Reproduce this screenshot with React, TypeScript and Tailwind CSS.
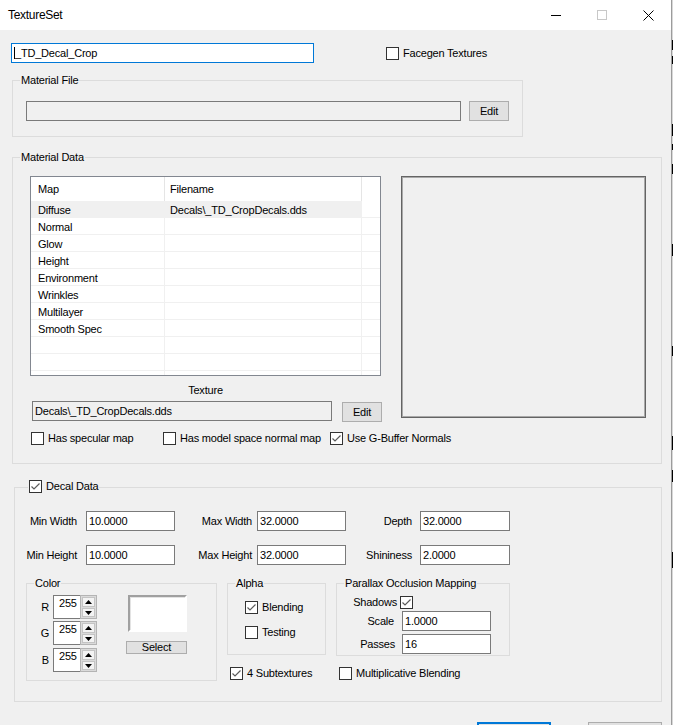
import React from 'react';

type Kids = { children?: React.ReactNode };

const maps: [string, string][] = [
  ['Diffuse', 'Decals\\_TD_CropDecals.dds'],
  ['Normal', ''],
  ['Glow', ''],
  ['Height', ''],
  ['Environment', ''],
  ['Wrinkles', ''],
  ['Multilayer', ''],
  ['Smooth Spec', ''],
  ['', ''],
  ['', ''],
  ['', ''],
];

const decalRows: [string, string][][] = [
  [['Min Width', '10.0000'], ['Max Width', '32.0000'], ['Depth', '32.0000']],
  [['Min Height', '10.0000'], ['Max Height', '32.0000'], ['Shininess', '2.0000']],
];

function Check({ checked }: { checked?: boolean }) {
  return (
    <span className="flex h-[13px] w-[13px] shrink-0 items-center justify-center border border-[#333333] bg-white">
      {checked && (
        <svg width="11" height="11" viewBox="0 0 11 11">
          <path d="M1.5 5.5 L4 8 L9.5 2.5" fill="none" stroke="#5c5c5c" strokeWidth="1.2" />
        </svg>
      )}
    </span>
  );
}

function CheckLabel({ label, checked, className = '' }: { label: string; checked?: boolean; className?: string }) {
  return (
    <div className={`flex items-center leading-[13px] ${className}`}>
      <Check checked={checked} />
      <span className="ml-[4px]">{label}</span>
    </div>
  );
}

function TextBox({ value = '', className = '', grey }: { value?: string; className?: string; grey?: boolean }) {
  return (
    <div
      className={`h-[20px] shrink-0 overflow-hidden whitespace-nowrap border border-[#7a7a7a] pl-[2px] leading-[18px] ${
        grey ? 'bg-[#f0f0f0]' : 'bg-white'
      } ${className}`}
    >
      {value}
    </div>
  );
}

function Button({ label, className = '' }: { label: string; className?: string }) {
  return (
    <div className={`flex shrink-0 items-center justify-center border border-[#adadad] bg-[#e1e1e1] ${className}`}>
      {label}
    </div>
  );
}

function Group({
  legend,
  legendClass = 'left-[7px] top-[-7px]',
  className = '',
  children,
}: Kids & { legend: React.ReactNode; legendClass?: string; className?: string }) {
  return (
    <div className={`relative shrink-0 border border-[#dcdcdc] ${className}`}>
      <div className={`absolute bg-[#f0f0f0] px-px leading-[13px] ${legendClass}`}>{legend}</div>
      {children}
    </div>
  );
}

function Arrow({ down }: { down?: boolean }) {
  return (
    <svg width="7" height="4" viewBox="0 0 7 4">
      <path d={down ? 'M0 0 L7 0 L3.5 4Z' : 'M0 4 L3.5 0 L7 4Z'} fill="#000" />
    </svg>
  );
}

function Spin({ value }: { value: string }) {
  return (
    <div className="flex h-[24px] w-[44px]">
      <div className="w-[27px] border border-r-0 border-[#7a7a7a] bg-white pl-[5px] pt-px leading-[13px]">{value}</div>
      <div className="flex w-[17px] flex-col border border-[#b4b4b4] bg-[#dadada] p-px">
        <div className="flex h-[10px] items-center justify-center border border-[#c4c4c4] bg-[#f3f3f3]">
          <Arrow />
        </div>
        <div className="mt-px flex h-[9px] items-center justify-center border border-[#c4c4c4] bg-[#f3f3f3]">
          <Arrow down />
        </div>
      </div>
    </div>
  );
}

function TitleBar() {
  return (
    <div className="flex h-[30px] items-center bg-white">
      <span className="pl-[8px] text-[12px] tracking-[-0.3px]">TextureSet</span>
      <div className="ml-auto flex h-full">
        <div className="flex w-[46px] items-center justify-center">
          <svg width="10" height="10" viewBox="0 0 10 10">
            <path d="M0 5.5 H10" stroke="#000" strokeWidth="1" />
          </svg>
        </div>
        <div className="flex w-[46px] items-center justify-center">
          <svg width="10" height="10" viewBox="0 0 10 10">
            <rect x="0.5" y="0.5" width="9" height="9" fill="none" stroke="#c8c8c8" strokeWidth="1" />
          </svg>
        </div>
        <div className="flex w-[46px] items-center justify-center">
          <svg width="11" height="11" viewBox="0 0 11 11">
            <path d="M0.5 0.5 L10.5 10.5 M10.5 0.5 L0.5 10.5" stroke="#000" strokeWidth="1" />
          </svg>
        </div>
      </div>
    </div>
  );
}

function MapTable() {
  return (
    <div className="h-[200px] w-[351px] overflow-hidden border border-[#828790] bg-white">
      <div className="flex h-[24px]">
        <div className="w-[134px] border-r border-[#e5e5e5] pl-[7px] pt-[6px] leading-[13px]">Map</div>
        <div className="w-[197px] border-r border-[#e5e5e5] pl-[5px] pt-[6px] leading-[13px]">Filename</div>
        <div className="flex-1" />
      </div>
      {maps.map(([map, file], i) => (
        <div key={i} className="flex h-[17px] border-b border-[#f0f0f0]">
          <div className={`flex w-[331px] ${i === 0 ? 'bg-[#f0f0f0]' : ''}`}>
            <div className="w-[134px] border-r border-[#f0f0f0] pl-[7px] pt-[2px] leading-[14px]">{map}</div>
            <div className="w-[197px] border-r border-[#f0f0f0] pl-[5px] pt-[2px] leading-[14px]">{file}</div>
          </div>
          <div className="flex-1" />
        </div>
      ))}
    </div>
  );
}

function MaterialData() {
  return (
    <Group legend="Material Data" className="ml-[12px] mt-[20px] h-[307px] w-[650px] pl-[17px] pt-[18px]">
      <div className="flex items-start">
        <div className="w-[351px]">
          <MapTable />
          <div className="flex h-[25px] items-center justify-center pt-[4px]">Texture</div>
          <div className="flex">
            <TextBox grey value="Decals\_TD_CropDecals.dds" className="ml-[2px] w-[300px]" />
            <Button label="Edit" className="ml-[10px] mt-px h-[20px] w-[40px]" />
          </div>
        </div>
        <div className="ml-[20px] h-[242px] w-[245px] border border-[#646464] bg-[#f0f0f0] shadow-[inset_0_0_0_1px_#a9a9a9]" />
      </div>
      <div className="mt-[10px] flex">
        <CheckLabel label="Has specular map" className="ml-px w-[132px]" />
        <CheckLabel label="Has model space normal map" className="w-[167px]" />
        <CheckLabel label="Use G-Buffer Normals" checked />
      </div>
    </Group>
  );
}

function DecalData() {
  return (
    <Group
      legend={<CheckLabel label="Decal Data" checked />}
      legendClass="left-[13px] top-[-8px]"
      className="ml-[14px] mt-[23px] h-[215px] w-[648px] pt-[23px]"
    >
      {decalRows.map((row, r) => (
        <div key={r} className={`flex items-center ${r ? 'mt-[14px]' : ''}`}>
          <span className="w-[62px] text-right">{row[0][0]}</span>
          <TextBox value={row[0][1]} className="ml-[9px] w-[89px]" />
          <span className="w-[77px] text-right">{row[1][0]}</span>
          <TextBox value={row[1][1]} className="ml-[5px] w-[89px]" />
          <span className="w-[66px] text-right">{row[2][0]}</span>
          <TextBox value={row[2][1]} className="ml-[8px] w-[90px]" />
        </div>
      ))}

      <div className="ml-[11px] mt-[18px] flex items-start">
        <Group legend="Color" className="h-[98px] w-[191px] pt-[11px]">
          <div className="flex">
            <div className="flex flex-col">
              {['R', 'G', 'B'].map((c, i) => (
                <div key={c} className={`flex items-center ${i === 1 ? 'mt-[2px]' : i === 2 ? 'mt-[3px]' : ''}`}>
                  <span className="w-[22px] text-right">{c}</span>
                  <div className="ml-[4px]">
                    <Spin value="255" />
                  </div>
                </div>
              ))}
            </div>
            <div className="ml-[29px] flex flex-col">
              <div className="ml-[2px] h-[37px] w-[59px] border-2 border-[#a0a0a0] border-b-white border-r-white bg-white shadow-[inset_1px_1px_0_#e3e3e3]" />
              <Button label="Select" className="mt-[9px] h-[13px] w-[61px] leading-[11px]" />
            </div>
          </div>
        </Group>

        <div className="flex flex-col">
          <div className="flex items-start">
            <Group legend="Alpha" className="ml-[10px] h-[72px] w-[99px] pl-[17px] pt-[17px]">
              <CheckLabel label="Blending" checked />
              <CheckLabel label="Testing" className="mt-[12px]" />
            </Group>
            <Group legend="Parallax Occlusion Mapping" className="ml-[10px] h-[73px] w-[174px] pt-[12px]">
              <div className="flex items-center leading-[13px]">
                <span className="w-[60px] text-right">Shadows</span>
                <span className="ml-[3px]">
                  <Check checked />
                </span>
              </div>
              <div className="mt-[2px] flex items-center">
                <span className="w-[57px] text-right">Scale</span>
                <TextBox value="1.0000" className="ml-[8px] w-[89px]" />
              </div>
              <div className="mt-[3px] flex items-center">
                <span className="w-[58px] text-right">Passes</span>
                <TextBox value="16" className="ml-[7px] w-[89px]" />
              </div>
            </Group>
          </div>
          <div className="mt-[11px] flex">
            <CheckLabel label="4 Subtextures" checked className="ml-[13px] w-[109px]" />
            <CheckLabel label="Multiplicative Blending" />
          </div>
        </div>
      </div>
    </Group>
  );
}

export default function App() {
  return (
    <div className="flex h-[725px] w-[673px] overflow-hidden bg-[#f0f0f0] font-['Liberation_Sans',Arial,sans-serif] text-[11px] tracking-[-0.2px] text-black">
      <div className="w-[671px] shrink-0">
        <TitleBar />

        <div className="ml-[11px] mt-[13px] flex items-center">
          <div className="flex h-[20px] w-[303px] items-center border border-[#0078d7] bg-white pl-[2px]">
            <span className="h-[12px] w-px bg-black" />
            <span>_TD_Decal_Crop</span>
          </div>
          <CheckLabel label="Facegen Textures" className="ml-[72px]" />
        </div>

        <Group legend="Material File" className="ml-[12px] mt-[17px] h-[57px] w-[511px] pl-[13px] pt-[20px]">
          <div className="flex">
            <TextBox grey className="w-[435px]" />
            <Button label="Edit" className="ml-[8px] h-[20px] w-[40px]" />
          </div>
        </Group>

        <MaterialData />
        <DecalData />

        <div className="mt-[20px] flex">
          <div className="ml-[477px] h-[23px] w-[74px] border-2 border-[#0078d7] bg-[#e1e1e1]" />
          <div className="ml-[37px] h-[23px] w-[74px] border border-[#adadad] bg-[#e1e1e1]" />
        </div>
      </div>

      {/* edge of the window behind */}
      <div className="w-px bg-[#9c9c9c]" />
      <div className="flex w-px flex-col bg-[#d8d8d8]">
        <span className="mt-[40px] h-[10px] bg-black" />
        <span className="mt-[6px] h-[8px] bg-black" />
        <span className="mt-[60px] h-[12px] bg-black" />
        <span className="mt-[8px] h-[6px] bg-black" />
        <span className="mt-[14px] h-[10px] bg-black" />
        <span className="mt-[70px] h-[12px] bg-black" />
        <span className="mt-[90px] h-[10px] bg-black" />
        <span className="mt-[80px] h-[14px] bg-black" />
        <span className="mt-[20px] h-[12px] bg-black" />
        <span className="mt-[70px] h-[16px] bg-black" />
      </div>
    </div>
  );
}
